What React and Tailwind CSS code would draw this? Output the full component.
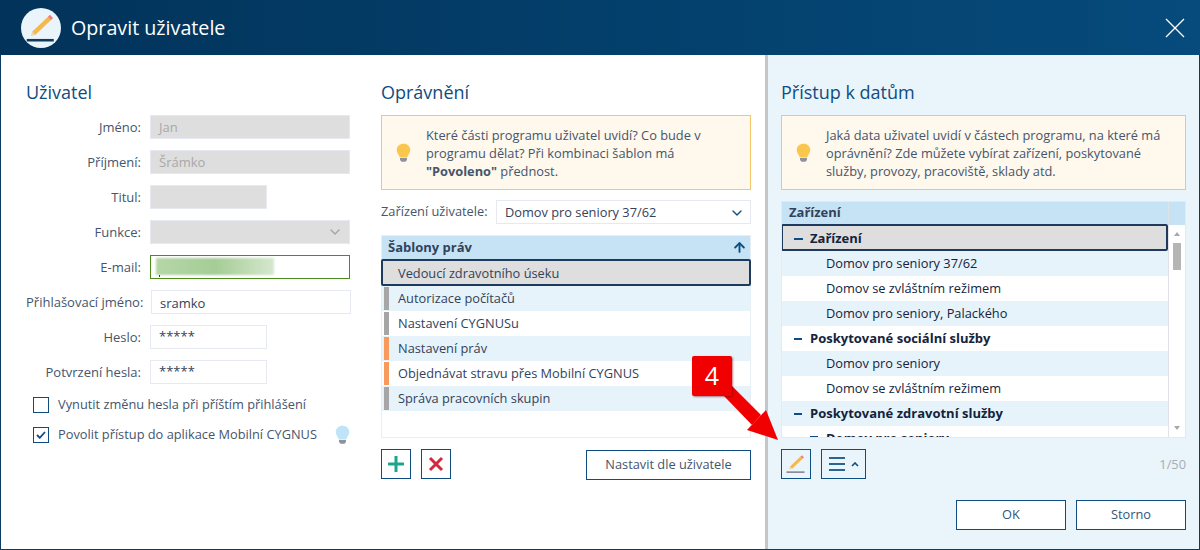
import { ChevronDown, ArrowUp } from 'lucide-react';

const FORM = [
  { label: 'Jméno:', value: 'Jan', width: 'w-[200px]', kind: 'off' },
  { label: 'Příjmení:', value: 'Šrámko', width: 'w-[200px]', kind: 'off' },
  { label: 'Titul:', value: '', width: 'w-[117px]', kind: 'off' },
];

const SABLONY = [
  { name: 'Autorizace počítačů', bar: 'bg-[#a6a6a6]', row: 'bg-[#e6f3fb]' },
  { name: 'Nastavení CYGNUSu', bar: 'bg-[#a6a6a6]', row: 'bg-white' },
  { name: 'Nastavení práv', bar: 'bg-[#f79a5b]', row: 'bg-[#e6f3fb]' },
  { name: 'Objednávat stravu přes Mobilní CYGNUS', bar: 'bg-[#f79a5b]', row: 'bg-white' },
  { name: 'Správa pracovních skupin', bar: 'bg-[#a6a6a6]', row: 'bg-[#e6f3fb]' },
];

const ZARIZENI = [
  { name: 'Domov pro seniory 37/62', row: 'bg-[#e6f3fb]' },
  { name: 'Domov se zvláštním režimem', row: 'bg-white' },
  { name: 'Domov pro seniory, Palackého', row: 'bg-[#e6f3fb]' },
  { name: 'Poskytované sociální služby', row: 'bg-white', group: true },
  { name: 'Domov pro seniory', row: 'bg-[#e6f3fb]' },
  { name: 'Domov se zvláštním režimem', row: 'bg-white' },
  { name: 'Poskytované zdravotní služby', row: 'bg-[#e6f3fb]', group: true },
  { name: 'Domov pro seniory', row: 'bg-white', group: true, sub: true },
];

function Bulb({ glass, className }) {
  return (
    <svg viewBox="0 0 16 21" className={className}>
      <path d="M8 0.5C3.8 0.5 0.8 3.4 0.8 7.2c0 3.4 2.6 5 3.2 8h8c0.6-3 3.2-4.6 3.2-8C15.2 3.4 12.200 0.5 8 0.5z" fill={glass} />
      <path d="M4.300 15.800h7.400v2.200l-1.600 1.800H5.900L4.300 18z" fill="#8f9299" />
    </svg>
  );
}

function Pencil({ className, line }) {
  return (
    <svg viewBox="0 0 20 20" className={className}>
      <path d="M4.070 12.500 L14.470 2.600 L16.530 4.800 L6.130 14.700 Z" fill="#f7b84b" />
      <path d="M3.300 15.300 L4.070 12.500 L6.130 14.700 Z" fill="#e9d3a8" />
      <path d="M14.470 2.600 L15.970 1.200 L18.030 3.400 L16.530 4.800 Z" fill="#ef7f78" />
      <rect x="0.500" y="17.300" width="18" height="1.700" fill={line} />
    </svg>
  );
}

function FormRow({ label, children }) {
  return (
    <div className="flex items-center h-[24px] mb-[11px]">
      <div className="w-[115px] pt-[1px] text-right text-[13px] text-[#45556c] shrink-0 whitespace-nowrap">{label}</div>
      <div className="ml-[9px] flex">{children}</div>
    </div>
  );
}

function Notice({ children }) {
  return (
    <div className="h-[75px] border border-[#f5c76d] bg-[#fff8ec] flex items-center text-[12.8px] leading-[18px] text-[#45556c]">
      <Bulb glass="#fbc64e" className="w-[15px] h-[20px] ml-[14px] mr-[15px] shrink-0" />
      <div>{children}</div>
    </div>
  );
}

export default function App() {
  return (
    <div className="w-[1200px] h-[550px] flex flex-col overflow-hidden relative font-['Open_Sans',sans-serif]">
      <header className="h-[55px] shrink-0 flex items-center bg-gradient-to-r from-[#02335a] to-[#064b7c]">
        <div className="ml-[21px] w-[40px] h-[40px] rounded-full bg-[#e9f4fb] flex items-center justify-center">
          <Pencil line="#0f3a5f" className="w-[30px] h-[30px]" />
        </div>
        <h1 className="ml-[10px] text-[19.7px] text-white">Opravit uživatele</h1>
        <svg viewBox="0 0 20 20" className="ml-auto mr-[15px] w-[20px] h-[20px]">
          <path d="M1 1L19 19M19 1L1 19" stroke="#ffffff" strokeWidth="1.300" fill="none" />
        </svg>
      </header>

      <main className="flex-1 flex border-x border-b border-[#0a3c64] min-h-0">
        {/* levá část */}
        <div className="w-[764px] bg-white flex shrink-0">
          <section className="w-[354px] ml-[25px] shrink-0">
            <h2 className="mt-[24px] h-[26px] leading-[26px] text-[18px] text-[#0f4c81] mb-[10px]">Uživatel</h2>
            {FORM.map(f => (
              <FormRow key={f.label} label={f.label}>
                <div className={`h-[24px] ${f.width} bg-[#dedede] border border-[#e6e9f2] px-[8px] text-[13px] leading-[22px] text-[#a8a8a8]`}>{f.value}</div>
              </FormRow>
            ))}
            <FormRow label="Funkce:">
              <div className="h-[24px] w-[200px] bg-[#dedede] border border-[#e6e9f2] flex items-center justify-end pr-[6px]">
                <ChevronDown size={16} className="text-[#a3a3a3]" />
              </div>
            </FormRow>
            <FormRow label="E-mail:">
              <div className="h-[24px] w-[200px] bg-white border border-[#4c8c1c] relative overflow-hidden">
                <div className="absolute left-[5px] top-[2px] w-[118px] h-[17px] bg-gradient-to-r from-[#b5d7a8] via-[#a5cc96] to-[#d5e8ce] blur-[1px]"></div>
                <div className="absolute left-[8px] top-[19px] w-[1px] h-[2px] bg-[#33425a]"></div>
              </div>
            </FormRow>
            <FormRow label="Přihlašovací jméno:">
              <div className="ml-[1px] h-[24px] w-[200px] bg-white border border-[#e6e9f2] px-[8px] text-[13px] leading-[24px] text-[#33425a]">sramko</div>
            </FormRow>
            <FormRow label="Heslo:">
              <div className="h-[24px] w-[117px] bg-white border border-[#e6e9f2] px-[8px] text-[13px] leading-[21px] text-[#33425a]">*****</div>
            </FormRow>
            <FormRow label="Potvrzení hesla:">
              <div className="h-[24px] w-[117px] bg-white border border-[#e6e9f2] px-[8px] text-[13px] leading-[21px] text-[#33425a]">*****</div>
            </FormRow>
            <div className="flex items-center h-[16px] ml-[7px] mt-[13px] text-[12.8px] text-[#45556c]">
              <span className="w-[16px] h-[16px] border border-[#0f4c81] bg-white"></span>
              <span className="ml-[9px]">Vynutit změnu hesla při příštím přihlášení</span>
            </div>
            <div className="flex items-center h-[16px] ml-[7px] mt-[14px] text-[12.8px] text-[#45556c]">
              <span className="w-[16px] h-[16px] border border-[#0f4c81] bg-white flex items-center justify-center">
                <svg viewBox="0 0 10 8" className="w-[10px] h-[8px]">
                  <path d="M1 4L3.800 6.800L9 1" stroke="#0f4c81" strokeWidth="1.800" fill="none" />
                </svg>
              </span>
              <span className="ml-[9px]">Povolit přístup do aplikace Mobilní CYGNUS</span>
              <Bulb glass="#bfe4f7" className="w-[15px] h-[20px] ml-[18px] shrink-0" />
            </div>
          </section>

          <section className="w-[370px] ml-[1px] shrink-0">
            <h2 className="mt-[24px] h-[26px] leading-[26px] text-[18px] text-[#0f4c81] mb-[10px]">Oprávnění</h2>
            <Notice>
              Které části programu uživatel uvidí? Co bude v<br />
              programu dělat? Při kombinaci šablon má<br />
              <b className="font-bold">"Povoleno"</b> přednost.
            </Notice>
            <div className="flex items-center mt-[10px] h-[24px]">
              <span className="text-[12.8px] text-[#45556c] w-[115px] shrink-0">Zařízení uživatele:</span>
              <div className="flex-1 h-[24px] border border-[#e6e9f2] bg-white flex items-center pl-[8px] pr-[5px] pt-[1px] text-[12.8px] text-[#33425a]">
                Domov pro seniory 37/62
                <ChevronDown size={16} className="ml-auto text-[#0f4c81]" />
              </div>
            </div>
            <div className="mt-[11px] h-[203px] border border-[#e6eef6] bg-white flex flex-col">
              <div className="h-[23px] shrink-0 bg-[#c5e3f5] flex items-center px-[6px] text-[13px] font-bold text-[#33425a]">
                Šablony práv
                <ArrowUp size={15} strokeWidth={3} className="ml-auto -mr-[3px] text-[#0f4c81]" />
              </div>
              <div className="h-[27px] shrink-0 bg-[#dedede] border-2 border-[#1d3a5c] rounded-[2px] -mx-[1px] pl-[15px] pt-[2px] flex items-center text-[12.8px] text-[#33425a]">
                Vedoucí zdravotního úseku
              </div>
              {SABLONY.map(s => (
                <div key={s.name} className={`h-[25px] shrink-0 flex items-center text-[12.8px] text-[#33425a] ${s.row}`}>
                  <span className={`ml-[2px] w-[5px] h-[23px] ${s.bar}`}></span>
                  <span className="ml-[9px]">{s.name}</span>
                </div>
              ))}
            </div>
            <div className="flex mt-[11px] h-[30px]">
              <button type="button" className="w-[30px] h-[30px] border border-[#0f4c81] bg-white flex items-center justify-center">
                <svg viewBox="0 0 18 18" className="w-[18px] h-[18px]">
                  <path d="M9 1V17M1 9H17" stroke="#1aa58e" strokeWidth="3" fill="none" />
                </svg>
              </button>
              <button type="button" className="ml-[10px] w-[30px] h-[30px] border border-[#0f4c81] bg-white flex items-center justify-center">
                <svg viewBox="0 0 16 16" className="w-[16px] h-[16px]">
                  <path d="M2 2L14 14M14 2L2 14" stroke="#d3293d" strokeWidth="3" fill="none" />
                </svg>
              </button>
              <button type="button" className="ml-auto mt-[1px] w-[165px] h-[30px] border border-[#0f4c81] bg-white text-[12.8px] text-[#45556c]">
                Nastavit dle uživatele
              </button>
            </div>
          </section>
        </div>

        {/* pravá část */}
        <aside className="flex-1 border-l-[3px] border-[#c4c7ca] bg-[#e9f4fb] pl-[13px] pr-[13px] flex flex-col min-w-0">
          <h2 className="mt-[24px] h-[26px] leading-[26px] text-[18px] text-[#0f4c81] mb-[10px]">Přístup k datům</h2>
          <Notice>
            Jaká data uživatel uvidí v částech programu, na které má<br />
            oprávnění? Zde můžete vybírat zařízení, poskytované<br />
            služby, provozy, pracoviště, sklady atd.
          </Notice>
          <div className="mt-[11px] h-[237px] border border-[#dfebf5] bg-white flex overflow-hidden">
            <div className="flex-1 min-w-0 flex flex-col">
              <div className="h-[22px] shrink-0 bg-[#c5e3f5] flex items-center px-[7px] text-[13px] font-bold text-[#33425a]">Zařízení</div>
              <div className="h-[27px] shrink-0 bg-[#dedede] border-2 border-[#1d3a5c] rounded-[2px] -ml-[1px] pt-[2px] flex items-center text-[13px] font-bold text-[#14233c]">
                <span className="ml-[11px] w-[9px] h-[2px] bg-[#0f4c81]"></span>
                <span className="ml-[7px]">Zařízení</span>
              </div>
              {ZARIZENI.map((z, i) => (
                <div key={i} className={`h-[25px] shrink-0 flex items-center ${z.group ? 'text-[13px] font-bold' : 'text-[12.8px]'} text-[#14233c] ${z.row}`}>
                  {z.group ? (
                    <>
                      <span className={`${z.sub ? 'ml-[28px] -mt-[3px]' : 'ml-[12px]'} w-[8px] h-[2px] bg-[#0f4c81]`}></span>
                      <span className="ml-[8px]">{z.name}</span>
                    </>
                  ) : (
                    <span className="ml-[44px]">{z.name}</span>
                  )}
                </div>
              ))}
            </div>
            <div className="w-[17px] shrink-0 border-l border-[#dfe3e8] flex flex-col">
              <div className="h-[23px] bg-[#c5e3f5] shrink-0"></div>
              <div className="flex-1 bg-white flex flex-col items-center relative">
                <span className="mt-[7px] w-0 h-0 border-x-[3px] border-x-transparent border-b-[4px] border-b-[#a8a8a8]"></span>
                <span className="mt-[7px] w-[8px] h-[27px] bg-[#b5b5b5]"></span>
                <span className="mt-auto mb-[7px] w-0 h-0 border-x-[3px] border-x-transparent border-t-[4px] border-t-[#a8a8a8]"></span>
              </div>
            </div>
          </div>
          <div className="flex items-center mt-[11px] h-[30px]">
            <button type="button" className="w-[30px] h-[30px] border border-[#0f4c81] flex items-center justify-center">
              <Pencil line="#8c8a9e" className="w-[20px] h-[20px]" />
            </button>
            <button type="button" className="ml-[10px] w-[45px] h-[30px] border border-[#0f4c81] flex items-center pl-[7px]">
              <svg viewBox="0 0 16 14" className="w-[16px] h-[14px]">
                <path d="M0 1H16M0 7H16M0 13H16" stroke="#2a6591" strokeWidth="2" fill="none" />
              </svg>
              <svg viewBox="0 0 8 5" className="ml-[6px] w-[8px] h-[5px]">
                <path d="M1 4L4 1L7 4" stroke="#0f4c81" strokeWidth="1.600" fill="none" />
              </svg>
            </button>
            <span className="ml-auto mt-[1px] text-[12.8px] text-[#a8adb3]">1/50</span>
          </div>
          <div className="flex justify-end mt-[21px] gap-[10px]">
            <button type="button" className="w-[110px] h-[30px] border border-[#0f4c81] bg-white text-[12.8px] text-[#33567a]">OK</button>
            <button type="button" className="w-[110px] h-[30px] border border-[#0f4c81] bg-white text-[12.8px] text-[#33567a]">Storno</button>
          </div>
        </aside>
      </main>

      {/* popisek přes obsah */}
      <svg viewBox="0 0 100 100" className="absolute left-[700px] top-[360px] w-[100px] h-[100px] pointer-events-none">
        <path d="M32 26 L61 55 L52 65 L24 36 Z" fill="#f00000" />
        <path d="M47 70 L66 50 L78 80 Z" fill="#f00000" />
      </svg>
      <div className="absolute left-[692px] top-[356px] w-[40px] h-[40px] rounded-[2px] bg-[#f00000] text-white text-[25px] flex items-center justify-center shadow-[1px_1px_2px_rgba(120,0,0,0.5)]">4</div>
    </div>
  );
}
